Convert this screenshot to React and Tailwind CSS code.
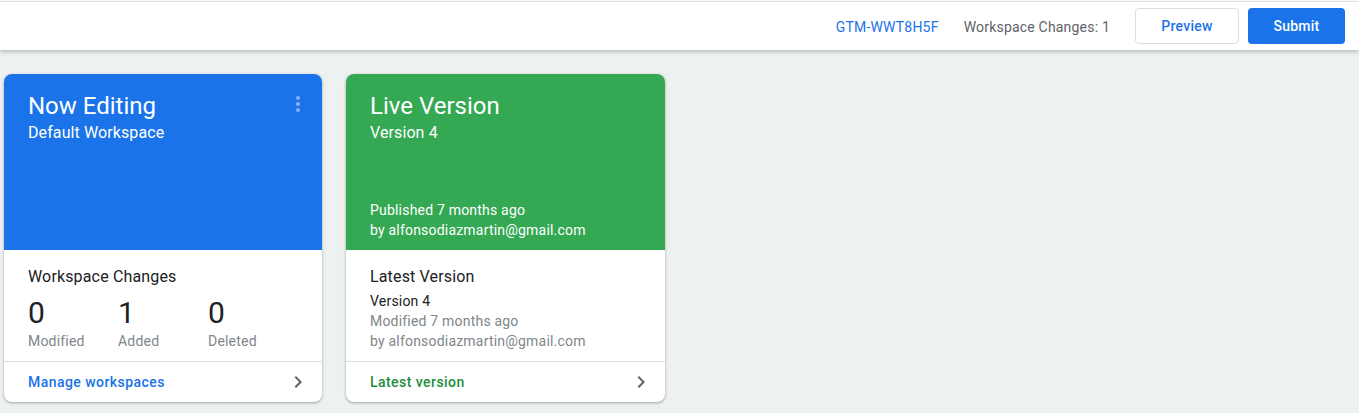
import React from 'react';

const font = { fontFamily: 'Roboto, "Liberation Sans", sans-serif' };

function Chevron() {
    return (
        <svg width="24" height="24" viewBox="0 0 24 24" className="fill-[#5f6368]">
            <path d="M10 6L8.59 7.41 13.17 12l-4.58 4.59L10 18l6-6z" />
        </svg>
    );
}

function Kebab() {
    return (
        <div className="flex flex-col gap-[2px] pt-[4px]">
            <span className="w-[4px] h-[4px] rounded-full bg-[#8ab4f8]" />
            <span className="w-[4px] h-[4px] rounded-full bg-[#8ab4f8]" />
            <span className="w-[4px] h-[4px] rounded-full bg-[#8ab4f8]" />
        </div>
    );
}

function Footer({ label, color }) {
    return (
        <div className="h-[41px] border-t border-[#dadce0] flex items-center justify-between pl-[24px] pr-[12px]">
            <span className={`text-[14px] font-medium tracking-[0.45px] ${color}`}>{label}</span>
            <Chevron />
        </div>
    );
}

export default function App() {
    const changes = [
        { n: 0, label: 'Modified' },
        { n: 1, label: 'Added' },
        { n: 0, label: 'Deleted' },
    ];

    return (
        <div className="min-h-screen bg-[#eef1f2]" style={font}>
            {/* top bar */}
            <div className="border-t border-[#e0e0e0] mt-[1px] bg-white h-[49px] flex items-center justify-end pr-[14px] shadow-[0_2px_4px_rgba(0,0,0,0.22)] relative">
                <span className="text-[14px] text-[#1a73e8] tracking-[0.2px] pt-[2px]">GTM-WWT8H5F</span>
                <span className="text-[14px] text-[#5f6368] ml-[25px] tracking-[0.2px] pt-[2px]">Workspace Changes: 1</span>
                <button className="ml-[25px] w-[104px] h-[36px] rounded-[4px] border border-[#dadce0] bg-white text-[14px] font-medium text-[#1a73e8] tracking-[0.25px]">
                    Preview
                </button>
                <button className="ml-[9px] w-[97px] h-[36px] rounded-[4px] bg-[#1a73e8] text-[14px] font-medium text-white tracking-[0.25px]">
                    Submit
                </button>
            </div>

            <div className="flex gap-[24px] pl-[4px] pt-[24px]">
                {/* now editing card */}
                <div className="w-[318px] rounded-[8px] bg-white overflow-hidden shadow-[0_1px_2px_rgba(60,64,67,0.3),0_1px_3px_1px_rgba(60,64,67,0.12)]">
                    <div className="h-[176px] bg-[#1a73e8] text-white pl-[24px] pr-[22px] pt-[18px] flex justify-between">
                        <div>
                            <div className="text-[24px] leading-[28px]">Now Editing</div>
                            <div className="text-[16px] leading-[20px] mt-[3px] tracking-[0.1px]">Default Workspace</div>
                        </div>
                        <Kebab />
                    </div>
                    <div className="h-[111px] pl-[24px] pt-[15px]">
                        <div className="text-[16px] leading-[24px] text-[#202124] tracking-[0.15px]">Workspace Changes</div>
                        <div className="flex mt-[6px]">
                            {changes.map((c, i) => (
                                <div key={i} className="w-[90px]">
                                    <div className="text-[30px] leading-[36px] text-[#202124]">{c.n}</div>
                                    <div className="text-[14px] leading-[20px] text-[#80868b] tracking-[0.2px]">{c.label}</div>
                                </div>
                            ))}
                        </div>
                    </div>
                    <Footer label="Manage workspaces" color="text-[#1a73e8]" />
                </div>

                {/* live version card */}
                <div className="w-[319px] rounded-[8px] bg-white overflow-hidden shadow-[0_1px_2px_rgba(60,64,67,0.3),0_1px_3px_1px_rgba(60,64,67,0.12)]">
                    <div className="h-[176px] bg-[#34a853] text-white pl-[24px] pt-[18px] pb-[10px] flex flex-col justify-between">
                        <div>
                            <div className="text-[24px] leading-[28px]">Live Version</div>
                            <div className="text-[16px] leading-[20px] mt-[3px] tracking-[0.1px]">Version 4</div>
                        </div>
                        <div className="text-[14px] leading-[20px] tracking-[0.2px]">
                            <div>Published 7 months ago</div>
                            <div>by alfonsodiazmartin@gmail.com</div>
                        </div>
                    </div>
                    <div className="h-[111px] pl-[24px] pt-[15px]">
                        <div className="text-[16px] leading-[24px] text-[#202124] tracking-[0.15px]">Latest Version</div>
                        <div className="mt-[2px] text-[14px] leading-[20px] tracking-[0.2px]">
                            <div className="text-[#202124]">Version 4</div>
                            <div className="text-[#80868b]">Modified 7 months ago</div>
                            <div className="text-[#80868b]">by alfonsodiazmartin@gmail.com</div>
                        </div>
                    </div>
                    <Footer label="Latest version" color="text-[#1e8e3e]" />
                </div>
            </div>
        </div>
    );
}
